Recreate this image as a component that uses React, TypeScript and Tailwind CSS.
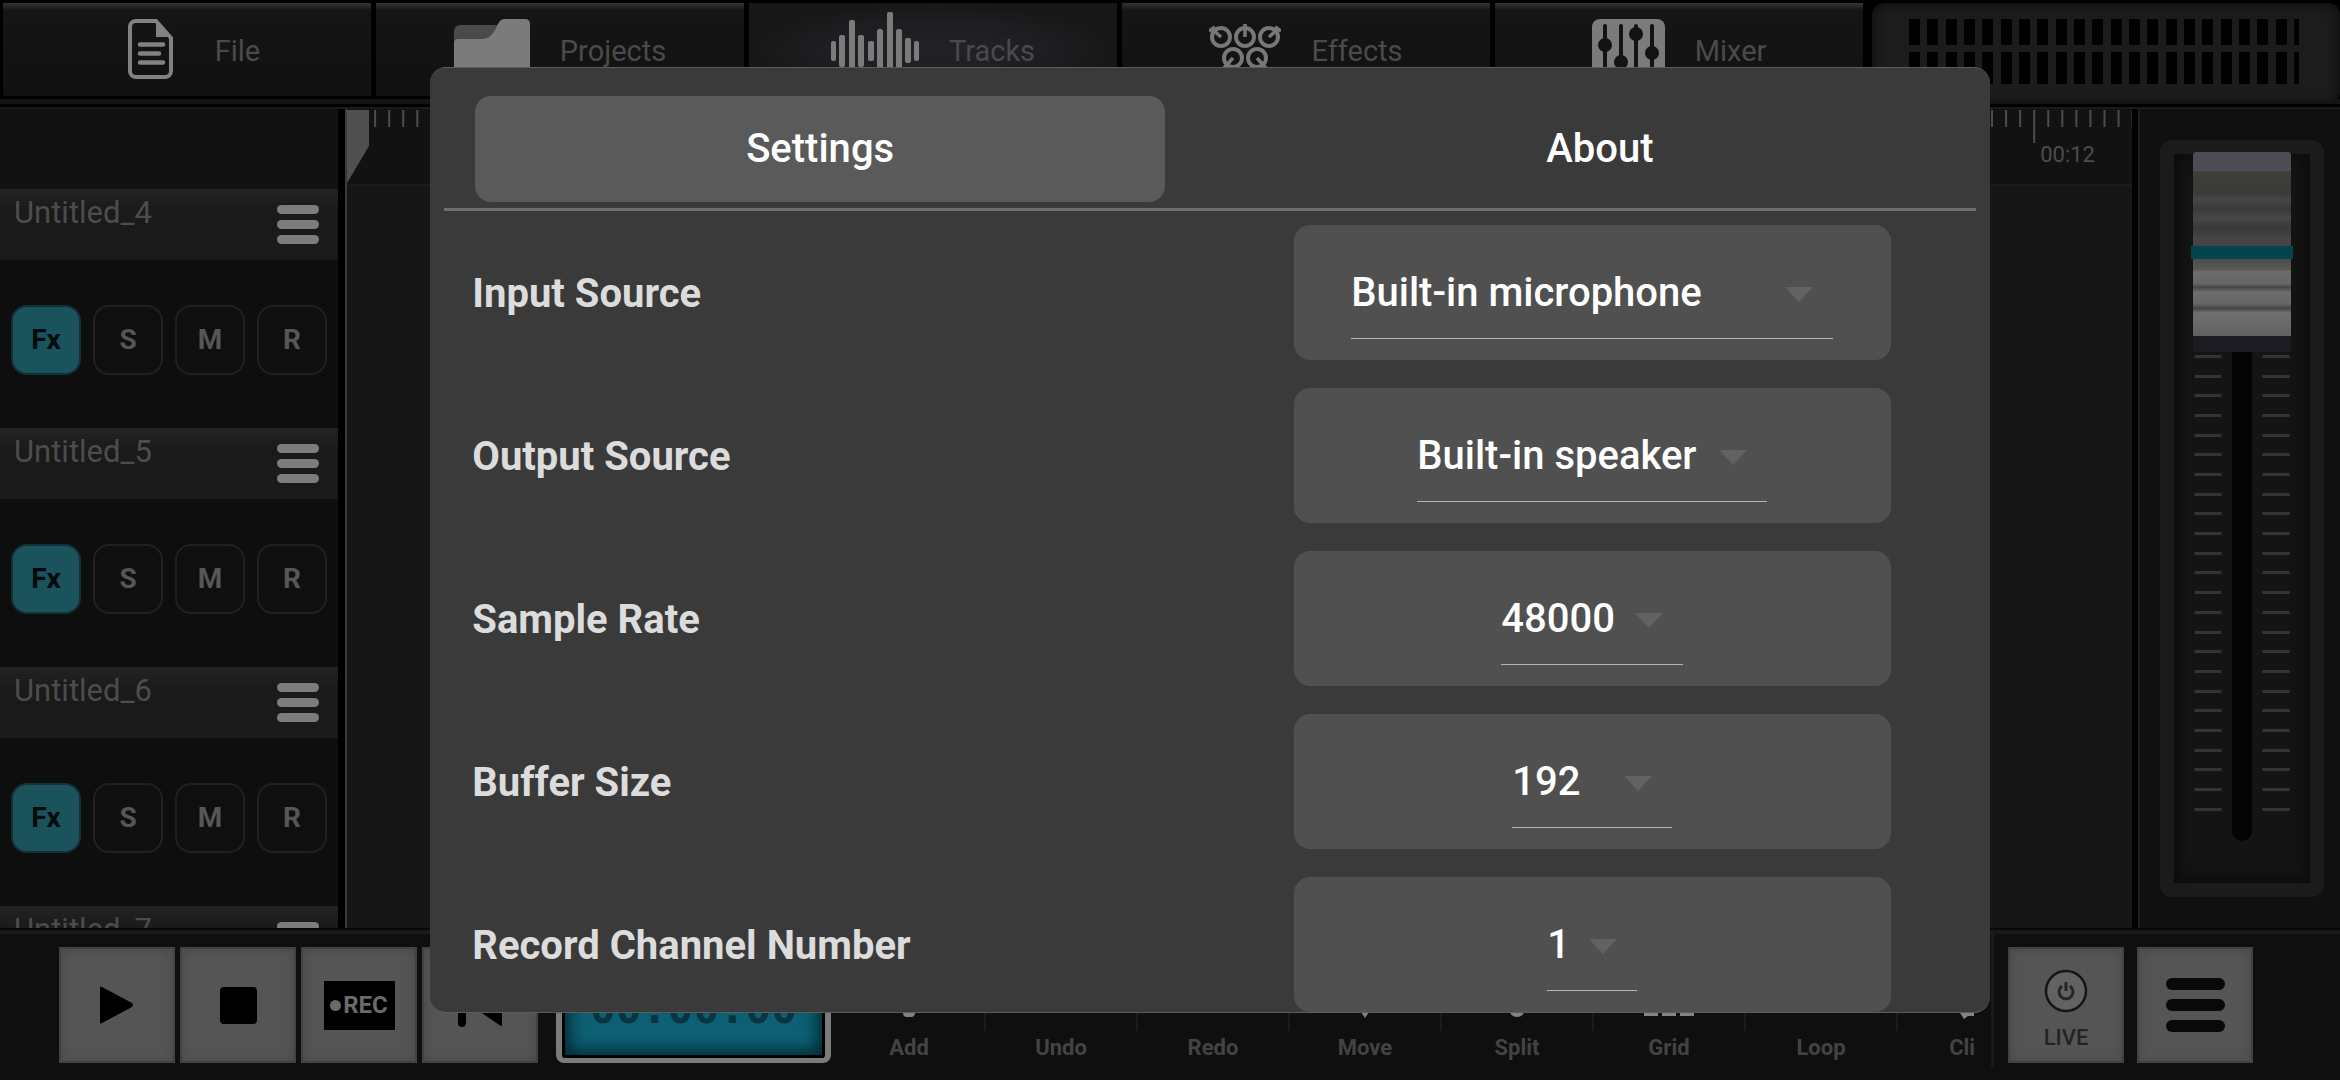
import { useState, type ReactNode } from "react";
import { clsx } from "clsx";

type NavItem = {
  label: string;
  icon: ReactNode;
};

type Setting = {
  id: string;
  label: string;
  value: string;
  width: string;
};

const FileIcon = () => (
  <svg width="71" height="60" viewBox="0 0 71 60" fill="none">
    <path d="M22 2h20l15 17v33a6 6 0 0 1-6 6H22a6 6 0 0 1-6-6V8a6 6 0 0 1 6-6z" stroke="#828282" strokeWidth="4" />
    <path d="M42 1l15 17H42z" fill="#828282" />
    <path d="M26 25.500h23M26 34.500h19M26 43.500h23" stroke="#828282" strokeWidth="4.500" strokeLinecap="round" />
  </svg>
);

const FolderIcon = () => (
  <svg width="76" height="60" viewBox="0 0 76 60">
    <path d="M0 12a6 6 0 0 1 6-6h40v20H0z" fill="#4a4a4a" />
    <path d="M0 60V24c0-3 2-4 5-4h22c8 0 11-4 14-9l3-6c2-4 4-5 8-5h19c3 0 5 2 5 5v55z" fill="#7b7b7b" />
  </svg>
);

const waveBars = [
  [0, 22, 42], [8, 16, 48], [18, 1, 62], [27, 16, 48], [37, 22, 42],
  [46, 10, 56], [56, -7, 70], [65, 10, 54], [74, 19, 44], [83, 22, 42],
];

const TracksIcon = () => (
  <svg width="88" height="60" viewBox="0 0 88 60" overflow="visible">
    {waveBars.map(([x, top, bottom]) => (
      <rect key={x} x={x} y={top} width={x > 0 && x < 80 ? 6 : 5} height={bottom - top} rx="2" fill="#7b7b7b" />
    ))}
  </svg>
);

const EffectsIcon = () => (
  <svg width="72" height="60" viewBox="0 0 72 60" fill="none" stroke="#777" strokeWidth="4">
    <circle cx="12" cy="18" r="9" />
    <circle cx="36" cy="18" r="9" />
    <circle cx="60" cy="18" r="9" />
    <circle cx="24" cy="39" r="9" />
    <circle cx="48" cy="39" r="9" />
    <path d="M12 18L3 10M0 12l6-4M36 18V5M60 18l10-9M72 12l-6-4M24 39l-9 10M48 39l9 10" strokeWidth="3.500" />
  </svg>
);

const MixerIcon = () => (
  <svg width="73" height="60" viewBox="0 0 73 60">
    <rect width="73" height="70" rx="8" fill="#7b7b7b" />
    <path d="M13 7v60M29 7v60M44 7v60M60 7v60" stroke="#131313" strokeWidth="4" strokeLinecap="round" />
    <g fill="#131313">
      <circle cx="13" cy="26" r="7" />
      <circle cx="29" cy="43" r="7" />
      <circle cx="44" cy="15" r="7" />
      <circle cx="60" cy="34" r="7" />
    </g>
  </svg>
);

const navItems: NavItem[] = [
  { label: "File", icon: <FileIcon /> },
  { label: "Projects", icon: <FolderIcon /> },
  { label: "Tracks", icon: <TracksIcon /> },
  { label: "Effects", icon: <EffectsIcon /> },
  { label: "Mixer", icon: <MixerIcon /> },
];

const tracks = ["Untitled_4", "Untitled_5", "Untitled_6", "Untitled_7"];

const settings: Setting[] = [
  { id: "input", label: "Input Source", value: "Built-in microphone", width: "w-[482px]" },
  { id: "output", label: "Output Source", value: "Built-in speaker", width: "w-[350px]" },
  { id: "rate", label: "Sample Rate", value: "48000", width: "w-[182px]" },
  { id: "buffer", label: "Buffer Size", value: "192", width: "w-[160px]" },
  { id: "channels", label: "Record Channel Number", value: "1", width: "w-[90px]" },
];

const tools: NavItem[] = [
  { label: "Add", icon: <path d="M24 4h12v50a4 4 0 0 1-4 4h-4a4 4 0 0 1-4-4zM6 22h48v12H6z" /> },
  { label: "Undo", icon: <path d="M24 12L6 26l18 14V31c14 0 20 6 20 22 8-18 0-32-20-32z" /> },
  { label: "Redo", icon: <path d="M36 12l18 14-18 14V31c-14 0-20 6-20 22-8-18 0-32 20-32z" /> },
  { label: "Move", icon: <path d="M30 0l8 12h-5v15h15v-5l12 8-12 8v-5H33v14h5l-8 12-8-12h5V33H12v5L0 30l12-8v5h15V12h-5z" /> },
  { label: "Split", icon: <path d="M28 0h4v46h-4zM30 42a8 8 0 1 0 0 16 8 8 0 0 0 0-16zm0 4a4 4 0 1 1 0 8 4 4 0 0 1 0-8z" /> },
  { label: "Grid", icon: <path d="M5 5h14v14H5zM23 5h14v14H23zM41 5h14v14H41zM5 23h14v14H5zM23 23h14v14H23zM41 23h14v14H41zM5 41h14v16H5zM23 41h14v16H23zM41 41h14v16H41z" /> },
  { label: "Loop", icon: <path d="M8 14h38V6l12 12-12 12v-8H16v10H8zM52 32v16H14v5L2 43l12-9v6h30v-8z" /> },
  { label: "Clips", icon: <path d="M16 4h32v53H24l-4 3-4-6z" /> },
];

const PadButton = ({ label, children }: { label: string; children: ReactNode }) => (
  <button
    aria-label={label}
    className="flex size-[116px] shrink-0 flex-col items-center justify-center border-2 border-[#424242] bg-[#555] shadow-[inset_0_0_12px_#484848]"
  >
    {children}
  </button>
);

const Meter = () => (
  <div className="mt-[3px] flex flex-1 flex-col items-center gap-[7px] rounded-xl bg-[#1c1c1c] pt-4 pr-1 shadow-[inset_0_0_12px_#0a0a0a]">
    <div className="h-[26px] w-[390px] bg-[repeating-linear-gradient(90deg,#000_0_2.8%,#1c1c1c_2.8%_4.7%)]" />
    <div className="h-8 w-[390px] bg-[repeating-linear-gradient(90deg,#000_0_2.8%,#1c1c1c_2.8%_4.7%)]" />
  </div>
);

const TopBar = () => (
  <header className="flex h-[107px] shrink-0 flex-col bg-black">
    <div className="flex h-[104px] bg-[linear-gradient(#000_96px,#000_99px,#141414_99px)]">
      <nav className="flex h-24 w-4/5 gap-[5px] pt-[3px] pr-[9px] pl-[3px]">
        {navItems.map(({ label, icon }) => (
          <button
            key={label}
            className={clsx(
              "flex min-w-0 flex-1 items-start justify-center gap-[30px] overflow-hidden pt-4 text-[29px] leading-[64px] text-[#4a4a4a]",
              label === "Tracks"
                ? "bg-[radial-gradient(closest-side,#232327,#1e1e22_60%,#171717)]"
                : "bg-linear-to-b from-[#343434] from-0% via-[#151515] via-8% to-[#111]"
            )}
          >
            {icon}
            <span>{label}</span>
          </button>
        ))}
      </nav>
      <Meter />
    </div>
  </header>
);

const TrackRow = ({ name }: { name: string }) => (
  <li className="h-[239px] shrink-0 bg-[#0e0e0e]">
    <div className="flex h-[71px] items-start justify-between bg-linear-to-b from-[#232323] to-[#1a1a1a] to-30% pr-[19px] pl-[14px]">
      <span className="pt-1 text-[31px] leading-10 text-[#4c4c4c]">{name}</span>
      <button aria-label={`${name} menu`} className="flex flex-col gap-1.5 pt-4">
        <span className="h-[9px] w-[42px] rounded-full bg-[#7c7c7c]" />
        <span className="h-[9px] w-[42px] rounded-full bg-[#7c7c7c]" />
        <span className="h-[9px] w-[42px] rounded-full bg-[#7c7c7c]" />
      </button>
    </div>
    <div className="flex gap-3 px-[11px] pt-[45px] text-[28px] font-bold text-[#565656]">
      <button className="size-[70px] rounded-2xl border-2 border-[#123238] bg-[#1b535d] text-[#020a0c]">Fx</button>
      <button className="size-[70px] rounded-2xl border-2 border-[#202020] bg-[#0f0f0f]">S</button>
      <button className="size-[70px] rounded-2xl border-2 border-[#202020] bg-[#0f0f0f]">M</button>
      <button className="size-[70px] rounded-2xl border-2 border-[#202020] bg-[#0f0f0f]">R</button>
    </div>
  </li>
);

const ticks = Array.from({ length: 128 }, (_, i) => i);

const Timeline = () => (
  <main className="min-w-0 flex-1 overflow-hidden border-l-2 border-[#3a3a3a] bg-[#161616]">
    <svg width="100%" height="77" className="bg-[#121212]">
      {ticks.map((i) => (
        <rect key={i} x={i * 14.06 - 1} y="1" width="2" height={i % 10 === 0 ? 33 : 17} fill="#4c4c4c" />
      ))}
      <path d="M0 1h22v36L0 74z" fill="#505050" />
      <rect y="75" width="100%" height="2" fill="#1b1b1b" />
      {[2, 4, 6, 8, 10, 12].map((second) => (
        <text key={second} x={second * 140.6 + 6} y="53" fontSize="22" fill="#4c4c4c">
          {`00:${String(second).padStart(2, "0")}`}
        </text>
      ))}
    </svg>
  </main>
);

const FaderTicks = () => (
  <div className="flex flex-col justify-between pb-[72px]">
    {Array.from({ length: 34 }, (_, i) => (
      <span key={i} className="h-[3px] w-[28px] rounded-full bg-[#343434]" />
    ))}
  </div>
);

const FaderKnob = () => (
  <svg width="102" height="204" viewBox="0 0 102 204" className="absolute -top-0.5 left-1/2 -translate-x-1/2">
    <defs>
      <linearGradient id="upper" x2="0" y2="1">
        <stop offset="0" stopColor="#413f39" />
        <stop offset="0.300" stopColor="#3a3a3a" />
        <stop offset="0.370" stopColor="#464646" />
        <stop offset="0.500" stopColor="#393939" />
        <stop offset="0.620" stopColor="#474747" />
        <stop offset="0.750" stopColor="#393939" />
        <stop offset="0.900" stopColor="#474444" />
        <stop offset="1" stopColor="#444" />
      </linearGradient>
      <linearGradient id="lower" x2="0" y2="1">
        <stop offset="0" stopColor="#4c4c4c" />
        <stop offset="0.140" stopColor="#5a5a5a" />
        <stop offset="0.160" stopColor="#6d6d6d" />
        <stop offset="0.320" stopColor="#666" />
        <stop offset="0.370" stopColor="#484848" />
        <stop offset="0.430" stopColor="#6d6d6d" />
        <stop offset="0.580" stopColor="#666" />
        <stop offset="0.640" stopColor="#444" />
        <stop offset="0.700" stopColor="#707070" />
        <stop offset="1" stopColor="#616161" />
      </linearGradient>
    </defs>
    <rect x="2" y="0" width="98" height="22" rx="3" fill="#4e4c56" />
    <rect x="2" y="19" width="98" height="76" fill="url(#upper)" />
    <rect x="2" y="107" width="98" height="77" fill="url(#lower)" />
    <rect x="0" y="94" width="102" height="13" fill="#03444d" />
    <rect x="2" y="184" width="98" height="16" rx="2" fill="#1c1b21" />
  </svg>
);

const MasterFader = () => (
  <aside className="flex w-[202px] shrink-0 border-l-2 border-[#1f1f1f] bg-[#101010] py-[31px] pr-4 pl-5">
    <div className="relative flex flex-1 justify-center gap-[10px] rounded-xl border-[14px] border-[#1b1b1b] bg-[#141414] pt-1 shadow-[inset_0_0_18px_#080808]">
      <FaderTicks />
      <div className="mb-[42px] w-5 rounded-full bg-[#040404]" />
      <FaderTicks />
      <FaderKnob />
      <input
        type="range"
        aria-label="Master volume"
        defaultValue={100}
        className="absolute inset-0 h-full w-full opacity-0 [writing-mode:vertical-lr]"
      />
    </div>
  </aside>
);

const Transport = () => (
  <footer className="flex h-[152px] shrink-0 bg-[#0f0f0f] shadow-[inset_0_2px_#080808,inset_0_6px_#191919]">
    <div className="flex shrink-0 gap-[5px] pt-[19px] pl-[59px]">
      <PadButton label="Play">
        <svg width="34" height="38" viewBox="0 0 34 38">
          <path d="M0 1Q1 0 2 1l30 16q2 2 0 4L2 37q-1 1-2 0z" />
        </svg>
      </PadButton>
      <PadButton label="Stop">
        <span className="size-[37px] rounded-sm bg-black" />
      </PadButton>
      <PadButton label="Record">
        <span className="flex h-[49px] w-[71px] items-center justify-center gap-0.5 bg-black text-2xl leading-6 font-bold text-[#6a6a6a]">
          <span className="size-[11px] rounded-full bg-[#6a6a6a]" />
          REC
        </span>
      </PadButton>
      <PadButton label="Rewind">
        <svg width="44" height="38" viewBox="0 0 44 38" overflow="visible">
          <rect width="8" height="41" rx="4" />
          <path d="M43 1v38L14 19z" stroke="#000" strokeWidth="2" strokeLinejoin="round" />
        </svg>
      </PadButton>
    </div>
    <output className="mt-[19px] ml-[18px] flex h-[116px] w-[275px] shrink-0 items-center justify-center rounded-lg border-x-[6px] border-y-[5px] border-[#7b7b7b] bg-[#0d6074] pt-1.5 font-['DejaVu_Sans_Mono',monospace] text-[43px] font-bold text-[#083540] shadow-[inset_0_0_0_3px_#000,inset_0_0_16px_8px_#042a33]">
      00:00.00
    </output>
    <div className="flex min-w-0 flex-1 overflow-hidden pt-[19px] pl-[3px]">
      {tools.map(({ label, icon }, i) => (
        <div key={label} className="flex w-[152px] shrink-0">
          <button className="flex flex-1 flex-col items-center text-[22px] leading-[30px] font-bold text-[#434343]">
            <svg width="60" height="60" viewBox="0 0 60 60" className="mt-3 mb-[14px] shrink-0" fill="#828282">
              {icon}
            </svg>
            {label}
          </button>
          {i < tools.length - 1 && <span className="h-[84px] w-0.5 bg-[#1c1c1c]" />}
        </div>
      ))}
    </div>
    <div className="mt-1.5 mb-3 ml-[17px] flex shrink-0 gap-[13px] border-l-[3px] border-[#191919] pt-[13px] pr-[87px] pl-[14px]">
      <PadButton label="Live">
        <svg width="44" height="44" viewBox="0 0 44 44" fill="none" className="mt-3">
          <circle cx="22" cy="22" r="20" fill="#626262" stroke="#151515" strokeWidth="2.500" />
          <path d="M18 17a7 7 0 1 0 8 0M22 13v9" stroke="#262626" strokeWidth="3" />
        </svg>
        <span className="pt-2.5 text-[22px] leading-[30px] font-medium text-[#242424]">LIVE</span>
      </PadButton>
      <PadButton label="Menu">
        <span className="flex flex-col gap-[9px]">
          <span className="h-3 w-[59px] rounded-full bg-[#090909]" />
          <span className="h-3 w-[59px] rounded-full bg-[#090909]" />
          <span className="h-3 w-[59px] rounded-full bg-[#090909]" />
        </span>
      </PadButton>
    </div>
  </footer>
);

const SettingRow = ({ id, label, value, width }: Setting) => (
  <div className="flex items-center justify-between">
    <label htmlFor={id} className="pt-0.5 text-[40px] font-bold text-[#dcdcdc]">
      {label}
    </label>
    <div className="flex h-[135px] w-[597px] justify-center rounded-2xl bg-[#505050] pt-5">
      <div className={clsx("relative h-[94px] border-b-[1px] border-[#b4b4b4]", width)}>
        <select
          id={id}
          defaultValue={value}
          className="h-full w-full appearance-none bg-transparent pt-0.5 pr-12 text-[40px] font-medium text-white outline-none"
        >
          <option>{value}</option>
        </select>
        <svg width="28" height="15" viewBox="0 0 28 15" className="pointer-events-none absolute top-[42px] right-5">
          <path d="M0 0h28L14 15z" fill="#626262" />
        </svg>
      </div>
    </div>
  </div>
);

const SettingsDialog = () => {
  const [tab, setTab] = useState("Settings");

  return (
    <div className="absolute inset-0 flex items-center justify-center pl-20">
      <div
        role="dialog"
        aria-label="Settings"
        className="flex h-[calc(100vh-134px)] w-[69%] flex-col overflow-hidden rounded-2xl border-y border-[#5c5c5c] bg-[#3a3a3a]"
      >
        <div role="tablist" className="mx-[14px] flex shrink-0 border-b-[3px] border-[#707070] pt-7 pb-1.5">
          {["Settings", "About"].map((name) => (
            <div key={name} className="flex flex-1 px-[31px] first:pr-[45px] last:pl-[45px]">
              <button
                role="tab"
                aria-selected={tab === name}
                onClick={() => setTab(name)}
                className={clsx(
                  "h-[106px] flex-1 rounded-2xl text-[40px] font-medium text-white",
                  tab === name && "bg-[#5a5a5a]"
                )}
              >
                {name}
              </button>
            </div>
          ))}
        </div>
        <div className="flex flex-col gap-7 overflow-hidden pt-[14px] pr-[99px] pl-[42px]">
          {settings.map((setting) => (
            <SettingRow key={setting.id} {...setting} />
          ))}
        </div>
      </div>
    </div>
  );
};

export default function App() {
  return (
    <div className="relative flex h-screen flex-col overflow-hidden bg-black font-[Roboto,sans-serif]">
      <TopBar />
      <div className="flex min-h-0 flex-1 border-t-2 border-[#1a1a1a]">
        <ul className="mr-[7px] flex w-[338px] shrink-0 flex-col overflow-hidden bg-[#121212] pt-20">
          {tracks.map((name) => (
            <TrackRow key={name} name={name} />
          ))}
        </ul>
        <Timeline />
        <div className="w-1.5 shrink-0" />
        <MasterFader />
      </div>
      <Transport />
      <SettingsDialog />
    </div>
  );
}
